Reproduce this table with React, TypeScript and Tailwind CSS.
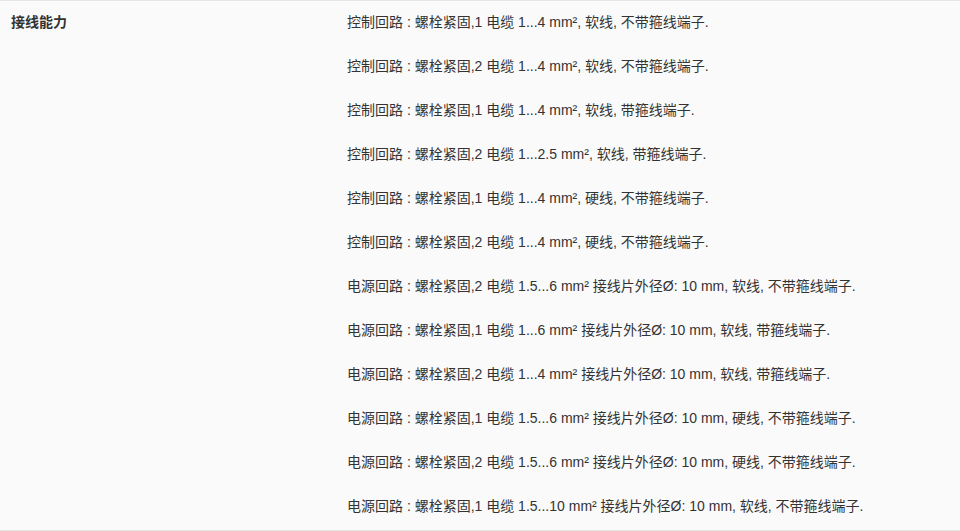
import React from "react";

const lines = [
  "控制回路 : 螺栓紧固,1 电缆 1...4 mm², 软线, 不带箍线端子.",
  "控制回路 : 螺栓紧固,2 电缆 1...4 mm², 软线, 不带箍线端子.",
  "控制回路 : 螺栓紧固,1 电缆 1...4 mm², 软线, 带箍线端子.",
  "控制回路 : 螺栓紧固,2 电缆 1...2.5 mm², 软线, 带箍线端子.",
  "控制回路 : 螺栓紧固,1 电缆 1...4 mm², 硬线, 不带箍线端子.",
  "控制回路 : 螺栓紧固,2 电缆 1...4 mm², 硬线, 不带箍线端子.",
  "电源回路 : 螺栓紧固,2 电缆 1.5...6 mm² 接线片外径Ø: 10 mm, 软线, 不带箍线端子.",
  "电源回路 : 螺栓紧固,1 电缆 1...6 mm² 接线片外径Ø: 10 mm, 软线, 带箍线端子.",
  "电源回路 : 螺栓紧固,2 电缆 1...4 mm² 接线片外径Ø: 10 mm, 软线, 带箍线端子.",
  "电源回路 : 螺栓紧固,1 电缆 1.5...6 mm² 接线片外径Ø: 10 mm, 硬线, 不带箍线端子.",
  "电源回路 : 螺栓紧固,2 电缆 1.5...6 mm² 接线片外径Ø: 10 mm, 硬线, 不带箍线端子.",
  "电源回路 : 螺栓紧固,1 电缆 1.5...10 mm² 接线片外径Ø: 10 mm, 软线, 不带箍线端子.",
];

export default function App() {
  return (
    <div
      className="w-[960px] h-[531px] bg-white text-[14px] text-[#333333]"
      style={{ fontFamily: '"Liberation Sans", "Noto Sans CJK SC", Arial, sans-serif' }}
    >
      <div className="grid grid-cols-[336px_1fr] pl-[11px] pt-[10px] pb-[13px] bg-[#fafafa] border-t border-b border-[#e6e6e6]">
        <div className="font-bold leading-[22px] h-[22px]">接线能力</div>
        <div className="flex flex-col gap-[22px]">
          {lines.map((l, i) => (
            <div key={i} className="leading-[22px] h-[22px] whitespace-nowrap">
              {l}
            </div>
          ))}
        </div>
      </div>
    </div>
  );
}
